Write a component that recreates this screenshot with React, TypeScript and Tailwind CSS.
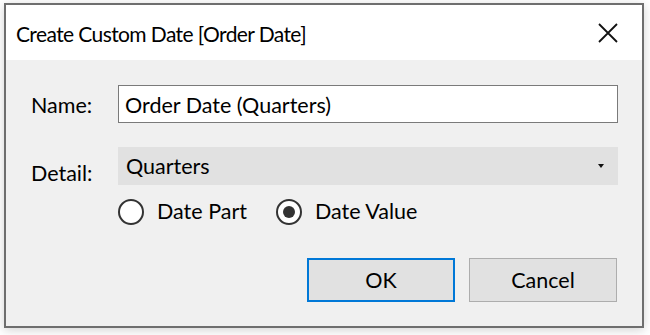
import React from 'react'

const font = { fontFamily: 'Lato, "Noto Sans", sans-serif' }

function Radio({ label, checked }: { label: string; checked?: boolean }) {
  return (
    <label className="flex items-center gap-[13px] w-[158px]">
      <span className="w-[26px] h-[26px] rounded-full border-2 border-[#333333] bg-white flex items-center justify-center">
        {checked && <span className="w-[12px] h-[12px] rounded-full bg-[#333333]" />}
      </span>
      <span className="text-[21.5px] text-black leading-none">{label}</span>
    </label>
  )
}

export default function App() {
  return (
    <div className="w-[650px] h-[335px] bg-white pt-[3px] pl-[4px]" style={font}>
      <div className="w-[640px] h-[325px] border-2 border-[#6e6e6e] flex flex-col shadow-[0_2px_10px_rgba(0,0,0,0.18)]">
        {/* Title bar */}
        <div className="h-[55px] bg-white flex items-center justify-between pl-[10px] pr-[24px]">
          <span className="text-[21px] tracking-[-0.6px] text-black leading-none pt-[2px]">
            Create Custom Date [Order Date]
          </span>
          <svg width="20" height="20" viewBox="0 0 20 20">
            <path d="M1 1 L19 19 M19 1 L1 19" stroke="#111" strokeWidth="1.8" />
          </svg>
        </div>

        {/* Body */}
        <div className="flex-1 bg-[#f0f0f0] pl-[25px] pr-[24px] pt-[25px] flex flex-col text-[21.5px] leading-none text-black">
          <div className="flex items-center h-[38px]">
            <span className="w-[87px] pt-[3px]">Name:</span>
            <div className="flex-1 h-[38px] bg-white border border-[#7a7a7a] flex items-center px-[6px] pt-[3px]">
              Order Date (Quarters)
            </div>
          </div>

          <div className="flex items-start h-[38px] mt-[24px]">
            <span className="w-[87px] pt-[16px]">Detail:</span>
            <div className="flex-1 h-[38px] bg-[#e1e1e1] flex items-center justify-between pl-[8px] pr-[14px]">
              <span className="pt-[2px]">Quarters</span>
              <svg width="6" height="4" viewBox="0 0 6 4">
                <path d="M0 0 H6 L3 4 Z" fill="#111" />
              </svg>
            </div>
          </div>

          <div className="flex items-center ml-[87px] mt-[14px]">
            <Radio label="Date Part" />
            <Radio label="Date Value" checked />
          </div>

          <div className="flex justify-end gap-[14px] mt-[33px] pr-[1px]">
            <button className="w-[148px] h-[44px] bg-[#e1e1e1] border-2 border-[#0078d7] pt-[1px]">
              OK
            </button>
            <button className="w-[148px] h-[44px] bg-[#e1e1e1] border border-[#adadad] pt-[1px]">
              Cancel
            </button>
          </div>
        </div>
      </div>
    </div>
  )
}
